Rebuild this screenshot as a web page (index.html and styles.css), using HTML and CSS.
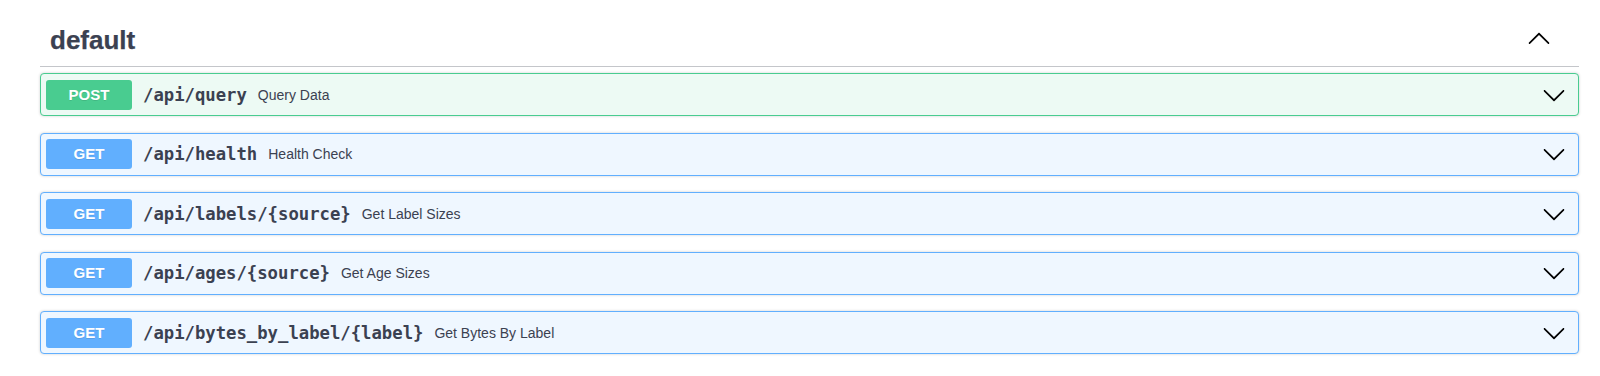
FILE: index.html
```html
<!DOCTYPE html>
<html lang="en">
<head>
<meta charset="utf-8">
<title>default</title>
<link rel="stylesheet" href="styles.css">
</head>
<body>
<div class="wrap">
  <div class="tag">
    <h3 class="tag-title">default</h3>
    <svg class="chev chev-up" viewBox="0 0 20 20" width="24" height="24"><path d="M17.418 6.109c.272-.268.709-.268.979 0s.271.701 0 .969l-7.908 7.830c-.27.268-.707.268-.979 0l-7.908-7.830c-.27-.268-.27-.701 0-.969.271-.268.709-.268.979 0L10 13.25l7.418-7.141z"/></svg>
  </div>
  <div class="ops">
    <div class="op op-post">
      <span class="method">POST</span>
      <span class="path">/api/query</span>
      <span class="desc">Query Data</span>
      <svg class="chev" viewBox="0 0 20 20" width="24" height="24"><path d="M17.418 6.109c.272-.268.709-.268.979 0s.271.701 0 .969l-7.908 7.83c-.27.268-.707.268-.979 0l-7.908-7.83c-.27-.268-.27-.701 0-.969.271-.268.709-.268.979 0L10 13.25l7.418-7.141z"/></svg>
    </div>
    <div class="op op-get">
      <span class="method">GET</span>
      <span class="path">/api/health</span>
      <span class="desc">Health Check</span>
      <svg class="chev" viewBox="0 0 20 20" width="24" height="24"><path d="M17.418 6.109c.272-.268.709-.268.979 0s.271.701 0 .969l-7.908 7.83c-.27.268-.707.268-.979 0l-7.908-7.83c-.27-.268-.27-.701 0-.969.271-.268.709-.268.979 0L10 13.25l7.418-7.141z"/></svg>
    </div>
    <div class="op op-get">
      <span class="method">GET</span>
      <span class="path">/api/labels/{source}</span>
      <span class="desc">Get Label Sizes</span>
      <svg class="chev" viewBox="0 0 20 20" width="24" height="24"><path d="M17.418 6.109c.272-.268.709-.268.979 0s.271.701 0 .969l-7.908 7.83c-.27.268-.707.268-.979 0l-7.908-7.83c-.27-.268-.27-.701 0-.969.271-.268.709-.268.979 0L10 13.25l7.418-7.141z"/></svg>
    </div>
    <div class="op op-get">
      <span class="method">GET</span>
      <span class="path">/api/ages/{source}</span>
      <span class="desc">Get Age Sizes</span>
      <svg class="chev" viewBox="0 0 20 20" width="24" height="24"><path d="M17.418 6.109c.272-.268.709-.268.979 0s.271.701 0 .969l-7.908 7.83c-.27.268-.707.268-.979 0l-7.908-7.83c-.27-.268-.27-.701 0-.969.271-.268.709-.268.979 0L10 13.25l7.418-7.141z"/></svg>
    </div>
    <div class="op op-get">
      <span class="method">GET</span>
      <span class="path">/api/bytes_by_label/{label}</span>
      <span class="desc">Get Bytes By Label</span>
      <svg class="chev" viewBox="0 0 20 20" width="24" height="24"><path d="M17.418 6.109c.272-.268.709-.268.979 0s.271.701 0 .969l-7.908 7.83c-.27.268-.707.268-.979 0l-7.908-7.83c-.27-.268-.27-.701 0-.969.271-.268.709-.268.979 0L10 13.25l7.418-7.141z"/></svg>
    </div>
  </div>
</div>
</body>
</html>
```
FILE: styles.css
```css
html, body {
  margin: 0;
  padding: 0;
  background: #fff;
}
body {
  font-family: "Liberation Sans", Arial, sans-serif;
  color: #3b4151;
}
.wrap {
  padding: 14px 21px 0 40px;
}
.tag {
  display: flex;
  align-items: center;
  justify-content: space-between;
  box-sizing: border-box;
  height: 53px;
  border-bottom: 1px solid rgba(59, 65, 81, 0.3);
  padding: 0 28px 0 10px;
  margin-bottom: 6px;
}
.tag-title {
  margin: 0;
  font-size: 26px;
  font-weight: 700;
  color: #3b4151;
  -webkit-text-stroke: 0.25px #3b4151;
}
.chev {
  fill: #000;
  display: block;
  flex: none;
}
.chev-up {
  transform: rotate(180deg);
  position: relative;
  top: -1px;
}
.op {
  display: flex;
  align-items: center;
  box-sizing: border-box;
  height: 43px;
  padding: 0 12px 0 5px;
  border: 1px solid;
  border-radius: 4px;
  box-shadow: 0 0 3px rgba(0, 0, 0, 0.19);
  margin-bottom: 16.5px;
}
.op-post {
  background: #edfaf4;
  border-color: #49cc90;
}
.op-get {
  background: #eff7ff;
  border-color: #61affe;
}
.method {
  flex: none;
  width: 86px;
  height: 30px;
  line-height: 30px;
  text-align: center;
  border-radius: 3px;
  color: #fff;
  font-size: 15px;
  font-weight: 700;
  text-shadow: 0 1px 0 rgba(0, 0, 0, 0.1);
}
.op-post .method { background: #49cc90; }
.op-get .method { background: #61affe; }
.path {
  font-family: "DejaVu Sans Mono", "Liberation Mono", monospace;
  font-weight: 700;
  font-size: 17.25px;
  color: #3b4151;
  padding: 0 11px 0 11px;
}
.desc {
  flex: 1;
  font-size: 14px;
  color: #3b4151;
}
```
